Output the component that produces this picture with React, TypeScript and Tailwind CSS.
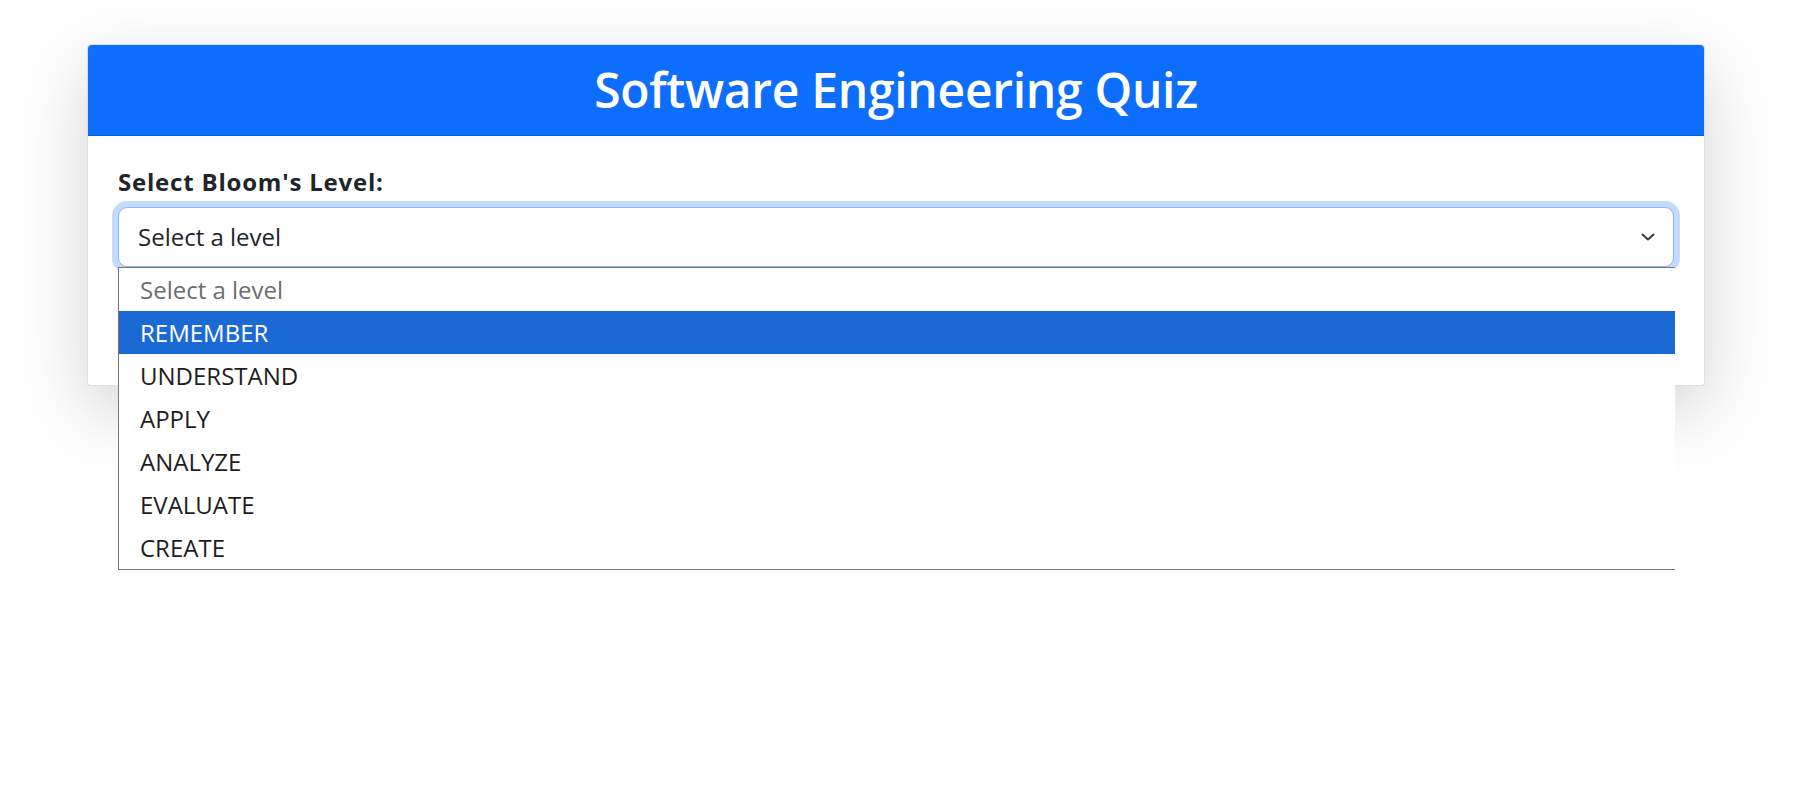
import React from "react";

const FONT = '"Open Sans", "Noto Sans", Arial, sans-serif';

function Chevron() {
  return (
    <svg width="14" height="10" viewBox="0 0 14 10" fill="none">
      <path d="M1.5 2.5 L7 7.5 L12.5 2.5" stroke="#343a40" strokeWidth="2" strokeLinecap="round" strokeLinejoin="round" />
    </svg>
  );
}

export default function App() {
  const options = ["REMEMBER", "UNDERSTAND", "APPLY", "ANALYZE", "EVALUATE", "CREATE"];
  return (
    <div className="relative min-h-screen w-full overflow-hidden bg-white pt-[44px]" style={{ fontFamily: FONT }}>
      <div className="ml-[87px] w-[1618px] rounded-[4px] border border-black/[0.12] bg-white shadow-[0_24px_72px_rgba(0,0,0,0.175)]">
        <div className="flex h-[91px] items-center justify-center rounded-t-[4px] border-b border-[#0b5fd9] bg-[#0d6efd]">
          <h1 className="text-[48px] font-semibold leading-none tracking-[-0.3px] text-white">Software Engineering Quiz</h1>
        </div>
        <div className="px-[30px] pb-[31px] pt-[28px]">
          <label className="mb-[7px] block text-[24px] font-bold leading-[36px] tracking-[0.8px] text-[#212529]">
            Select Bloom's Level:
          </label>
          <div className="relative">
            <div className="flex h-[60px] items-center justify-between rounded-[9px] border border-[#86b7fe] bg-white pl-[19px] pr-[18px] shadow-[0_0_0_6px_rgba(13,110,253,0.25)]">
              <span className="text-[24px] text-[#212529]">Select a level</span>
              <Chevron />
            </div>
            <div className="absolute left-0 top-[60px] z-10 w-[1557px] border-b border-l border-t border-[#767676] bg-white">
              <div className="flex h-[43px] items-center pl-[21px] text-[24px] text-[#6d6d6d]">Select a level</div>
              {options.map((o, i) => (
                <div
                  key={o}
                  className={
                    i === 0
                      ? "flex h-[43px] items-center bg-[#1b69d4] pl-[21px] text-[24px] text-white"
                      : "flex h-[43px] items-center pl-[21px] text-[24px] text-[#1e1e1e]"
                  }
                >
                  {o}
                </div>
              ))}
            </div>
          </div>
          <button className="mt-[35px] h-[52px] w-full rounded-[9px] bg-[#0d6efd] text-[24px] text-white">Start Quiz</button>
        </div>
      </div>
    </div>
  );
}
